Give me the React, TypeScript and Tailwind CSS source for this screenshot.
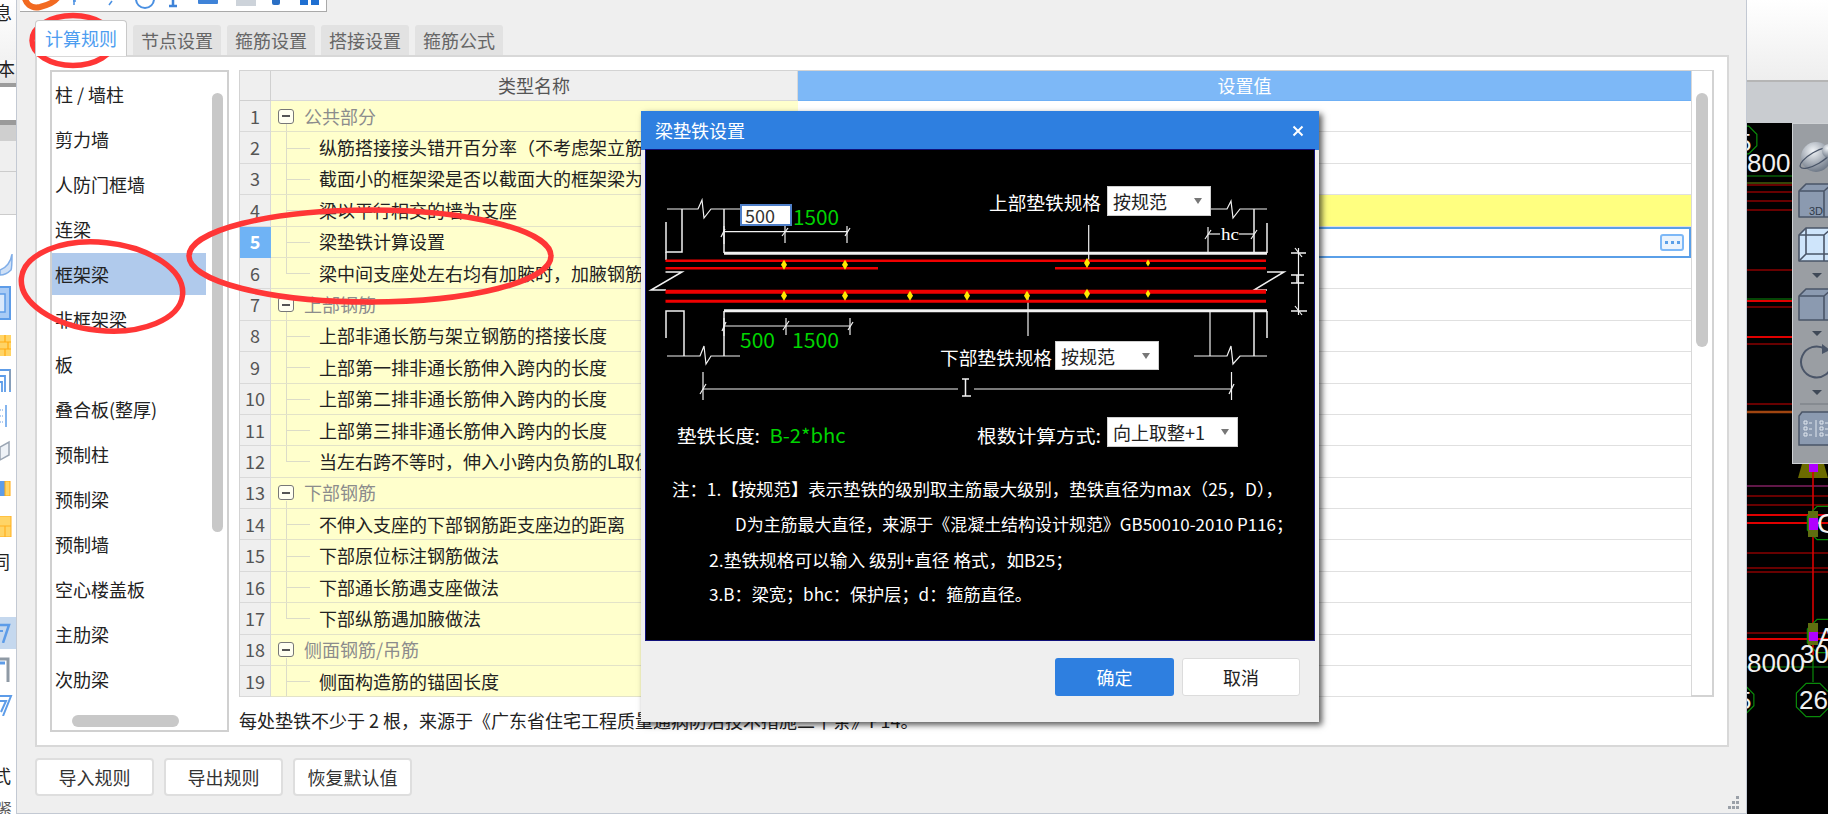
import React from "react";

const listItems = ["柱 / 墙柱","剪力墙","人防门框墙","连梁","框架梁","非框架梁","板","叠合板(整厚)","预制柱","预制梁","预制墙","空心楼盖板","主肋梁","次肋梁"];

type Row = { t: string; g?: boolean; last?: boolean };
const rows: Row[] = [
  { t: "公共部分", g: true },
  { t: "纵筋搭接接头错开百分率（不考虑架立筋）" },
  { t: "截面小的框架梁是否以截面大的框架梁为支座" },
  { t: "梁以平行相交的墙为支座" },
  { t: "梁垫铁计算设置" },
  { t: "梁中间支座处左右均有加腋时，加腋钢筋做法", last: true },
  { t: "上部钢筋", g: true },
  { t: "上部非通长筋与架立钢筋的搭接长度" },
  { t: "上部第一排非通长筋伸入跨内的长度" },
  { t: "上部第二排非通长筋伸入跨内的长度" },
  { t: "上部第三排非通长筋伸入跨内的长度" },
  { t: "当左右跨不等时，伸入小跨内负筋的L取值", last: true },
  { t: "下部钢筋", g: true },
  { t: "不伸入支座的下部钢筋距支座边的距离" },
  { t: "下部原位标注钢筋做法" },
  { t: "下部通长筋遇支座做法" },
  { t: "下部纵筋遇加腋做法", last: true },
  { t: "侧面钢筋/吊筋", g: true },
  { t: "侧面构造筋的锚固长度" },
];

function T({ x, y, w, fill = "#fff", size = 18, children, serif }: { x: number; y: number; w: number; fill?: string; size?: number; children: React.ReactNode; serif?: boolean }) {
  return (
    <text x={x} y={y} textLength={w} lengthAdjust="spacingAndGlyphs" fill={fill} fontSize={size} dominantBaseline="central"
      fontFamily={serif ? "'Liberation Serif', serif" : "'Noto Sans CJK SC', sans-serif"}>
      {children}
    </text>
  );
}

function Dia({ x, y, s = 1 }: { x: number; y: number; s?: number }) {
  const a = 3 * s, b = 5 * s;
  return <polygon points={`${x},${y - b} ${x + a},${y} ${x},${y + b} ${x - a},${y}`} fill="#ffe800" />;
}

function Diagram() {
  const wl = "#f2f2f2";
  return (
    <svg viewBox="646 150 668 490" width={668} height={490} className="block">
      <g stroke={wl} strokeWidth={1.2} fill="none">
        <line x1={724} y1={253.3} x2={1267} y2={253.3} strokeWidth={3} />
        <line x1={724} y1={310.7} x2={1267} y2={310.7} strokeWidth={3} />
        <polyline points="667,209 698,209 702,200 704,218 711,209 740,209" />
        <polyline points="666,222 666,252 682,252 682,209" strokeWidth={1.5} />
        <line x1={666} y1={252} x2={666} y2={260} strokeWidth={1.5} />
        <line x1={724} y1={209} x2={724} y2={253} strokeWidth={1.5} />
        <line x1={724} y1={231.7} x2={847.6} y2={231.7} />
        <line x1={724} y1={226} x2={724} y2={244} />
        <line x1={785} y1={226} x2={785} y2={243} />
        <line x1={847} y1={226} x2={847} y2={243} />
        <polyline points="721,237 725,229" /><polyline points="782,236 788,228" /><polyline points="845,236 850,228" />
        <polyline points="665.5,272 682,272 651,290 666,290" strokeWidth={1.5} />
        <polyline points="1267,272 1284,272 1254,290 1267,290" strokeWidth={1.5} />
        <polyline points="666,338 666,311 684,311 684,356" strokeWidth={1.5} />
        <polyline points="667,356 700,356 704,346 706,364 711,356 740,356" />
        <line x1={724} y1={311} x2={724} y2={356} strokeWidth={1.5} />
        <line x1={724} y1={326} x2={850} y2={326} />
        <line x1={724} y1={318} x2={724} y2={336} />
        <line x1={786} y1={318} x2={786} y2={335} />
        <line x1={850} y1={318} x2={850} y2={335} />
        <polyline points="722,331 726,322" /><polyline points="783,330 789,321" /><polyline points="848,330 853,322" />
        <polyline points="1210,209 1227,209 1231,201 1233,218 1240,209 1267,209" />
        <line x1={1254} y1={209} x2={1254} y2={253} strokeWidth={1.5} />
        <line x1={1267} y1={223} x2={1267} y2={253} strokeWidth={1.5} />
        <line x1={1208} y1={227} x2={1208} y2={253} />
        <line x1={1208} y1={234} x2={1220} y2={234} />
        <line x1={1239} y1={234} x2={1254} y2={234} />
        <polyline points="1205,239 1211,230" /><polyline points="1251,239 1257,230" />
        <line x1={1210} y1={311} x2={1210} y2={356} />
        <line x1={1254} y1={311} x2={1254} y2={356} strokeWidth={1.5} />
        <line x1={1267} y1={311} x2={1267} y2={338} strokeWidth={1.5} />
        <polyline points="1194,356 1227,356 1231,346 1233,364 1240,356 1267,356" />
        <line x1={1298.5} y1={248} x2={1298.5} y2={315} />
        <line x1={1291} y1={253} x2={1306} y2={253} strokeWidth={1.5} />
        <line x1={1291} y1={311} x2={1307} y2={311} strokeWidth={1.5} />
        <polyline points="1295,248 1302,257" /><polyline points="1295,306 1302,315" />
        <path d="M1291 275h13M1291 283h13M1297 275v8" strokeWidth={1.5} />
        <line x1={1088.7} y1={225} x2={1088.7} y2={263} />
        <line x1={1028} y1={297} x2={1028} y2={336} />
        <line x1={703} y1={389} x2={958} y2={389} />
        <line x1={974} y1={389} x2={1231.5} y2={389} />
        <line x1={703} y1={372} x2={703} y2={400} />
        <line x1={1231.5} y1={372} x2={1231.5} y2={400} />
        <polyline points="700,394 706,384" /><polyline points="1229,394 1234,384" />
        <path d="M962 379h7M965.5 379v17M962 396h9" strokeWidth={1.5} />
      </g>
      <g stroke="#f00000" fill="none">
        <line x1={665.5} y1={260.7} x2={1266} y2={260.7} strokeWidth={2.5} />
        <line x1={665.5} y1={268.3} x2={878} y2={268.3} strokeWidth={2.5} />
        <line x1={1055} y1={268.3} x2={1266} y2={268.3} strokeWidth={2.5} />
        <line x1={665.5} y1={291.7} x2={1266} y2={291.7} strokeWidth={4} />
        <line x1={665.5} y1={301.3} x2={1266} y2={301.3} strokeWidth={3} />
      </g>
      <Dia x={784} y={264.7} /><Dia x={845} y={264.7} />
      <Dia x={1087} y={263} /><Dia x={1148} y={263} s={0.7} />
      <Dia x={784} y={295.7} /><Dia x={845} y={295.7} /><Dia x={910} y={295.7} /><Dia x={967} y={295.7} /><Dia x={1027} y={295.7} />
      <Dia x={1087} y={293.7} /><Dia x={1148} y={293.7} s={0.8} />
      <T x={793} y={216} w={46} fill="#00d400" size={20}>1500</T>
      <T x={740} y={339} w={35} fill="#00d400" size={20}>500</T>
      <T x={792} y={339} w={47} fill="#00d400" size={20}>1500</T>
      <T x={1221} y={234} w={18} size={16} serif>hc</T>
      <T x={989} y={202} w={112}>上部垫铁规格</T>
      <T x={940} y={357} w={112}>下部垫铁规格</T>
      <T x={677} y={435} w={83}>垫铁长度:</T>
      <T x={769.5} y={434} w={76} fill="#00d400" size={19}>B-2*bhc</T>
      <T x={977} y={435} w={124}>根数计算方式:</T>
      <T x={672} y={488} w={611} size={17}>注：1.【按规范】表示垫铁的级别取主筋最大级别，垫铁直径为max（25，D），</T>
      <T x={735} y={523} w={558} size={17}>D为主筋最大直径，来源于《混凝土结构设计规范》GB50010-2010 P116；</T>
      <T x={709} y={559} w={364} size={17}>2.垫铁规格可以输入 级别+直径 格式，如B25；</T>
      <T x={709} y={593} w={323} size={17}>3.B：梁宽；bhc：保护层；d：箍筋直径。</T>
    </svg>
  );
}

function Sel({ label, cls }: { label: string; cls: string }) {
  return (
    <div className={`absolute flex items-center justify-between bg-white border border-[#cfcfcf] pl-[5px] pr-[8px] text-[18px] leading-none text-[#222] ${cls}`}>
      <span>{label}</span>
      <svg width="8" height="6"><polygon points="0,0 8,0 4,6" fill="#777" /></svg>
    </div>
  );
}

function Hex({ x, y, r }: { x: number; y: number; r: number }) {
  const pts = Array.from({ length: 8 }, (_, i) => {
    const a = (Math.PI / 4) * i + Math.PI / 8;
    return `${x + r * Math.cos(a)},${y + r * Math.sin(a)}`;
  }).join(" ");
  return <polygon points={pts} fill="none" stroke="#0a8a0a" strokeWidth={1.2} />;
}

function CadCanvas() {
  const dark = [185, 192, 201, 210, 270, 307, 344, 404, 496, 505, 553, 568, 572, 633];
  const bright = [301, 337, 515, 523, 639];
  return (
    <svg viewBox="1747 123 81 691" width={81} height={691} className="block">
      <rect x={1747} y={123} width={81} height={691} fill="#000" />
      {dark.map((y) => <line key={y} x1={1747} x2={1828} y1={y} y2={y} stroke="#8a0000" strokeWidth={1.6} />)}
      {bright.map((y) => <line key={y} x1={1747} x2={1828} y1={y} y2={y} stroke="#e00000" strokeWidth={2} />)}
      <line x1={1747} x2={1828} y1={183} y2={183} stroke="#6a8a10" strokeWidth={1} />
      <line x1={1747} x2={1828} y1={299} y2={299} stroke="#0a8a0a" strokeWidth={1} />
      <line x1={1747} x2={1828} y1={412} y2={412} stroke="#a04510" strokeWidth={2.5} />
      <line x1={1747} x2={1828} y1={486} y2={486} stroke="#802060" strokeWidth={1.5} />
      <line x1={1747} x2={1792} y1={176} y2={176} stroke="#0a8a0a" strokeWidth={1} />
      <polygon points="1798,478 1802,464 1824,464 1828,478" fill="#6b6b00" />
      <rect x={1809} y={464} width={9} height={8} fill="#b000ff" />
      <line x1={1813} x2={1813} y1={472} y2={655} stroke="#d80000" strokeWidth={1.6} />
      <line x1={1813} x2={1813} y1={655} y2={682} stroke="#0a8a0a" strokeWidth={1.2} />
      <Hex x={1743} y={140} r={15} />
      <Hex x={1824} y={523} r={18} />
      <Hex x={1824} y={636} r={18} />
      <Hex x={1813} y={700} r={18} />
      <Hex x={1740} y={700} r={15} />
      <line x1={1747} x2={1828} y1={667} y2={667} stroke="#0a8a0a" strokeWidth={1} />
      <rect x={1808} y={511} width={10} height={26} fill="#5f6e10" />
      <rect x={1809} y={518} width={9} height={12} fill="#b000ff" />
      <rect x={1808} y={623} width={10} height={22} fill="#5f6e10" />
      <rect x={1809} y={632} width={9} height={9} fill="#b000ff" />
      <g fill="#f0f0f0" fontFamily="'Liberation Sans', sans-serif" fontSize={26}>
        <text x={1747} y={172}>800</text>
        <text x={1738} y={151} fontSize={24}>5</text>
        <text x={1747} y={672}>8000</text>
        <text x={1800} y={663}>30</text>
        <text x={1817} y={533} fontSize={28}>C</text>
        <text x={1818} y={646} fontSize={26}>A</text>
        <text x={1799} y={709}>26</text>
        <text x={1738} y={709} fontSize={24}>5</text>
      </g>
    </svg>
  );
}

function ToolStrip() {
  const s = "#4a5568";
  const fill = "#8b9ab0";
  return (
    <svg viewBox="1792 124 36 340" width={36} height={340} className="block">
      <defs>
        <radialGradient id="ball" cx="0.4" cy="0.3" r="0.8">
          <stop offset="0" stopColor="#f2f5f8" />
          <stop offset="1" stopColor="#5d6878" />
        </radialGradient>
      </defs>
      <circle cx={1815} cy={157} r={15} fill="url(#ball)" />
      <ellipse cx={1815} cy={158} rx={18} ry={6} fill="none" stroke={s} strokeWidth={1.3} transform="rotate(-30 1815 158)" />
      <circle cx={1828} cy={151} r={7} fill="url(#ball)" />
      <g stroke={s} strokeWidth={1.6} strokeLinejoin="round">
        <path d="M1798 191l7-7h26v33h-33z" fill={fill} />
        <path d="M1798 191h25v26M1823 191l8-7" fill="none" />
        <path d="M1798 235l7-7h26v33h-33z" fill="#cfe5fb" />
        <path d="M1798 235h25v26M1823 235l8-7M1805 228v26h26M1805 254l-7 7" fill="none" />
        <path d="M1798 296l7-7h26v31h-33z" fill={fill} />
        <path d="M1798 296h25v24M1823 296l8-7" fill="none" />
      </g>
      <text x={1808} y={215} fontSize={11} fill="#2f3a4a" fontFamily="'Liberation Sans', sans-serif">3D</text>
      <polygon points="1811,273 1821,273 1816,278" fill="#3f4957" />
      <polygon points="1811,331 1821,331 1816,336" fill="#3f4957" />
      <polygon points="1811,390 1821,390 1816,395" fill="#3f4957" />
      <path d="M1824 349a15.5 15.5 0 1 0 7 14" fill="none" stroke={s} strokeWidth={2} />
      <path d="M1821 344l8 6-8 4z" fill={s} />
      <line x1={1799} x2={1828} y1={404} y2={404} stroke="#7a7f85" strokeWidth={1.2} />
      <path d="M1798 416l3-4h27v33h-30z" fill={fill} stroke={s} strokeWidth={1.5} />
      <g fill="none" stroke="#dfe6ee" strokeWidth={1}>
        <path d="M1803 421h3v3h-3zM1803 427h3v3h-3zM1803 433h3v3h-3zM1819 421h3v3h-3zM1819 427h3v3h-3zM1819 433h3v3h-3z" />
        <path d="M1808 423h3M1808 429h3M1808 435h3M1824 423h3M1824 429h3M1824 435h3M1815 420v17" />
      </g>
    </svg>
  );
}

function LeftStrip() {
  return (
    <div className="w-[16px] h-full shrink-0 bg-white flex flex-col overflow-hidden text-[18px] text-[#222] leading-none">
      <div className="h-[60px] bg-gradient-to-b from-white to-[#f2f2f2] pt-[3px]"><span className="block -ml-[6px]">息</span></div>
      <div className="h-[23px] bg-gradient-to-b from-[#fbfbfb] to-[#e4e4e4]"><span className="block -ml-[3px] -mt-[1px]">本</span></div>
      <div className="h-[4px] bg-[#9c9c9c]" />
      <div className="h-[33px] bg-white" />
      <div className="h-[5px] bg-[#9a9a9a]" />
      <div className="h-[17px] bg-[#cfcfcf]" />
      <div className="h-[31px] bg-[#efefef] border-b border-[#cccccc]" />
      <div className="h-[43px] bg-[#efefef] border-b border-[#cccccc]" />
      <svg width="16" height="26" className="mt-[35px] block"><path d="M0 20C6 18 11 12 12 4 12 12 12 18 11 20 7 24 3 25 0 25z" fill="#cfe0f6" stroke="#80aee8" strokeWidth="1.5" /></svg>
      <svg width="16" height="34" className="mt-[10px] block"><rect x="-4" y="1" width="14" height="32" fill="#a9cbf5" stroke="#5d9ce8" strokeWidth="2" /><rect x="-4" y="8" width="9" height="18" fill="#dbe9fb" stroke="#5d9ce8" strokeWidth="1.5" /></svg>
      <svg width="16" height="21" className="mt-[15px] block"><rect x="0" y="0" width="11" height="21" fill="#ffd466" /><path d="M0 7h11M0 14h11M5 0v7M8 7v7M5 14v7" stroke="#ffaa10" strokeWidth="1.2" /></svg>
      <svg width="16" height="24" className="mt-[12px] block"><path d="M0 2h10v22M0 8h5v16M0 14h2v10" fill="none" stroke="#5d9ce8" strokeWidth="1.8" /><path d="M10 2v20" stroke="#999" strokeWidth="1.2" /></svg>
      <svg width="16" height="22" className="mt-[13px] block"><path d="M6 0v22" stroke="#5d9ce8" strokeWidth="1.5" /><path d="M0 5h4M0 11h4M0 17h4" stroke="#9bbfec" strokeDasharray="1 1" strokeWidth="1.5" /></svg>
      <svg width="16" height="21" className="mt-[13px] block"><path d="M0 7L9 2V15L0 20z" fill="#eef2f7" stroke="#9aa5b3" strokeWidth="1.5" /></svg>
      <svg width="16" height="15" className="mt-[20px] block"><rect x="-2" y="0" width="7" height="15" fill="#5d9ce8" /><rect x="5" y="0" width="5" height="15" fill="#ffd466" stroke="#ffaa10" /></svg>
      <svg width="16" height="21" className="mt-[20px] block"><rect x="-1" y="0" width="12" height="21" fill="#ffd466" stroke="#ffb020" strokeWidth="1" /><path d="M0 10h11M5 10v11" stroke="#ffb020" strokeWidth="1.2" /></svg>
      <div className="mt-[15px] h-[20px]"><span className="block -ml-[8px]">同</span></div>
      <div className="mt-[46px] h-[32px] bg-[#c5d8ee] flex items-center"><svg width="16" height="20" className="block"><path d="M0 2h9L3 20" fill="none" stroke="#5d9ce8" strokeWidth="2.5" /><path d="M0 8h3" stroke="#5d9ce8" strokeWidth="2" /></svg></div>
      <svg width="16" height="25" className="mt-[8px] block"><path d="M0 2h8v23" fill="none" stroke="#8f9aa5" strokeWidth="3" /><path d="M0 6h5" stroke="#5d9ce8" strokeWidth="3" /></svg>
      <svg width="16" height="22" className="mt-[12px] block"><path d="M0 2h11L3 22M0 7h6L1 18" fill="none" stroke="#5d9ce8" strokeWidth="2" /></svg>
      <div className="mt-[50px] h-[20px]"><span className="block -ml-[7px]">式</span></div>
      <div className="mt-[14px] text-[14px] text-[#555]"><span className="block -ml-[2px]">紧</span></div>
    </div>
  );
}

export default function App() {
  return (
    <div className="relative w-[1828px] h-[814px] overflow-hidden flex bg-[#efefef] font-['Noto_Sans_CJK_SC','Liberation_Sans',sans-serif] text-[18px] text-[#333]">
      <LeftStrip />

      <div className="relative w-[1731px] shrink-0 h-full bg-[#efefef] border-x border-b border-[#c3c9d3]">
        <div className="ml-[3px] w-[307px] h-[12px] bg-white border-r border-b border-[#a9a9a9] overflow-hidden">
          <svg width="307" height="11" className="block">
            <path d="M4 -6C5 4 11 9 20 7 28 5 35 2 38 -3" fill="none" stroke="#f26a21" strokeWidth="6" />
            <path d="M54 -2v7M53 1h3" stroke="#4a90e2" strokeWidth="1.5" fill="none" />
            <path d="M92 1l-3 4" stroke="#4a90e2" strokeWidth="1.5" />
            <circle cx="125" cy="-1" r="9" fill="none" stroke="#4a90e2" strokeWidth="2" />
            <path d="M153 -2v7M149 6h8" stroke="#3f83d8" strokeWidth="2.5" />
            <rect x="178" y="-4" width="20" height="8" rx="1" fill="#3f83d8" />
            <rect x="216" y="-6" width="20" height="12" fill="#cdd3da" />
            <rect x="252" y="-2" width="8" height="7" rx="2" fill="#2a6fc4" />
            <rect x="280" y="-3" width="8" height="8" fill="#1f6fd1" /><rect x="291" y="-3" width="8" height="8" fill="#1f6fd1" />
          </svg>
        </div>
        <div className="h-[43px] ml-[18px] flex items-end gap-[6px]">
          <div className="relative z-10 -mb-px w-[92px] h-[36px] flex items-center justify-center bg-white border border-b-0 border-[#c9c9c9] rounded-t-[4px] text-[#4d9df0]">计算规则</div>
          {["节点设置","箍筋设置","搭接设置","箍筋公式"].map((t) => (
            <div key={t} className="w-[88px] h-[30px] flex items-center justify-center bg-[#e2e2e2] rounded-t-[3px] text-[#666]">{t}</div>
          ))}
        </div>
        <div className="ml-[18px] w-[1694px] h-[692px] box-border bg-white border-2 border-[#d8d8d8] pl-[13px] pt-[13px] flex">
          <div className="relative w-[179px] h-[662px] box-border border-2 border-[#d0d0d0] shrink-0 overflow-hidden">
            {listItems.map((t) => (
              <div key={t} className="w-[154px] h-[45px] pt-px">
                <div className={`h-[42px] pl-[3px] flex items-center text-[#222] ${t === "框架梁" ? "bg-[#b0caec]" : ""}`}>{t}</div>
              </div>
            ))}
            <div className="absolute left-[160px] top-[21px] w-[11px] h-[439px] rounded-full bg-[#c8c8c8]" />
            <div className="absolute left-[20px] top-[643px] w-[107px] h-[12px] rounded-full bg-[#c8c8c8]" />
          </div>
          <div className="ml-[10px] w-[1475px] shrink-0">
            <div className="relative h-[627px] box-border border border-[#d3d3d3] border-r-2 border-b-2">
              <div className="h-[30px] flex">
                <div className="w-[31px] bg-[#efefef] border-r border-b border-[#d0d0d0]" />
                <div className="w-[527px] bg-[#efefef] border-r border-b border-[#d8d8d8] flex items-center justify-center text-[#555]">类型名称</div>
                <div className="w-[893px] bg-[#7db8f7] border-b border-[#6fb0f5] flex items-center justify-center text-white">设置值</div>
              </div>
              {rows.map((r, i) => {
                const n = i + 1;
                return (
                  <div key={n} className="h-[31.4px] flex">
                    <div className={`w-[31px] box-border border-r border-b flex items-center justify-center ${n === 5 ? "bg-[#6fb3f5] border-[#6fb3f5] text-white font-bold" : "bg-[#efefef] border-[#d9d9d9] text-[#555]"}`}>{n}</div>
                    <div className="relative w-[527px] box-border bg-[#ffffcc] border-b border-[#e3e3c8] flex items-center overflow-hidden whitespace-nowrap">
                      {r.g ? (
                        <>
                          <div className="w-[16px] h-[15px] ml-[7px] box-border border border-[#777] rounded-[3px] bg-[#fffff0] flex items-center justify-center"><div className="w-[8px] h-[2px] bg-[#555]" /></div>
                          <span className="ml-[10px] text-[#8c8c8c]">{r.t}</span>
                          <div className="absolute left-[15px] top-[23px] bottom-0 w-px bg-[#dcdcc8]" />
                        </>
                      ) : (
                        <>
                          <div className={`absolute left-[15px] top-0 w-px bg-[#dcdcc8] ${r.last ? "h-1/2" : "h-full"}`} />
                          <div className="absolute left-[15px] top-1/2 w-[24px] h-px bg-[#dcdcc8]" />
                          <span className="ml-[48px] text-[#222]">{r.t}</span>
                        </>
                      )}
                    </div>
                    {n === 5 ? (
                      <div className="w-[893px] box-border bg-white border-2 border-[#5a9fe8] flex items-center justify-end pr-[5px]">
                        <div className="w-[24px] h-[17px] box-border border-2 border-[#7db8f7] rounded-[3px] bg-[#eaf3fd] flex items-center justify-center gap-[3px]">
                          {[0, 1, 2].map((d) => <div key={d} className="w-[3px] h-[3px] bg-[#5a9fe8]" />)}
                        </div>
                      </div>
                    ) : (
                      <div className={`w-[893px] box-border border-b border-[#e0e0e0] ${n === 4 ? "bg-[#ffff80]" : "bg-white"}`} />
                    )}
                  </div>
                );
              })}
              <div className="absolute right-0 top-0 bottom-0 w-[21px] bg-white border-l border-[#d8d8d8]" />
              <div className="absolute right-[4px] top-[22px] w-[12px] h-[254px] rounded-full bg-[#c8c8c8]" />
            </div>
            <div className="mt-[11px] leading-[24px] text-[#222] whitespace-nowrap">每处垫铁不少于 2 根，来源于《广东省住宅工程质量通病防治技术措施二十条》P14。</div>
          </div>
        </div>
        <div className="mt-[11px] ml-[18px] flex gap-[10px]">
          {["导入规则","导出规则","恢复默认值"].map((t) => (
            <div key={t} className="w-[119px] h-[38px] box-border bg-white border-2 border-[#dedede] rounded-[4px] flex items-center justify-center text-[#333]">{t}</div>
          ))}
        </div>
        <svg width="14" height="14" className="absolute right-[5px] bottom-[3px]">
          <g fill="#9aa0a8"><rect x="9" y="0" width="3" height="3" /><rect x="5" y="5" width="3" height="3" /><rect x="9" y="5" width="3" height="3" /><rect x="1" y="10" width="3" height="3" /><rect x="5" y="10" width="3" height="3" /><rect x="9" y="10" width="3" height="3" /></g>
        </svg>
      </div>

      <div className="relative w-[81px] shrink-0 h-full bg-black">
        <div className="h-[82px] bg-gradient-to-b from-white to-[#eeeeee] border-b-2 border-[#b5b5b5]" />
        <div className="h-[41px] bg-[#c9ccd0]" />
        <CadCanvas />
        <div className="absolute right-0 top-[123px] w-[36px] h-[341px] bg-[#9a9ea3] border-l border-t border-b border-[#cfd2d5]">
          <ToolStrip />
        </div>
      </div>

      <div className="absolute left-[641px] top-[111px] w-[678px] h-[611px] bg-[#efefef] shadow-[3px_3px_6px_rgba(0,0,0,0.65)] flex flex-col">
        <div className="h-[39px] bg-[#2e7fe0] flex items-center justify-between pl-[14px] pr-[15px] text-white">
          <span>梁垫铁设置</span>
          <svg width="12" height="12"><path d="M1.5 1.5l9 9M10.5 1.5l-9 9" stroke="#fff" strokeWidth="2" /></svg>
        </div>
        <div className="relative mx-auto w-[668px] h-[490px] bg-black outline outline-1 outline-[#10107a]">
          <Diagram />
          <div className="absolute left-[94px] top-[54px] w-[52px] h-[22px] box-border bg-white border-2 border-[#4f7fc8] flex items-center pl-[3px] text-[#333] leading-none">500</div>
          <Sel label="按规范" cls="left-[461px] top-[36px] w-[104px] h-[30px]" />
          <Sel label="按规范" cls="left-[409px] top-[191px] w-[104px] h-[29px]" />
          <Sel label="向上取整+1" cls="left-[461px] top-[267px] w-[131px] h-[30px]" />
        </div>
        <div className="flex justify-end gap-[8px] pt-[18px] pr-[19px]">
          <div className="w-[119px] h-[38px] rounded-[3px] bg-[#2e7fe0] flex items-center justify-center text-white">确定</div>
          <div className="w-[118px] h-[38px] box-border rounded-[3px] bg-white border border-[#dcdcdc] flex items-center justify-center text-[#222]">取消</div>
        </div>
      </div>

      <svg width="1828" height="814" className="absolute left-0 top-0 pointer-events-none" fill="none" stroke="#ff3636" strokeWidth="5.5">
        <ellipse cx="73" cy="40.5" rx="41" ry="25" />
        <ellipse cx="102" cy="286.5" rx="81" ry="44" transform="rotate(6 102 286.5)" />
        <ellipse cx="370" cy="256" rx="181" ry="46" />
      </svg>
    </div>
  );
}
